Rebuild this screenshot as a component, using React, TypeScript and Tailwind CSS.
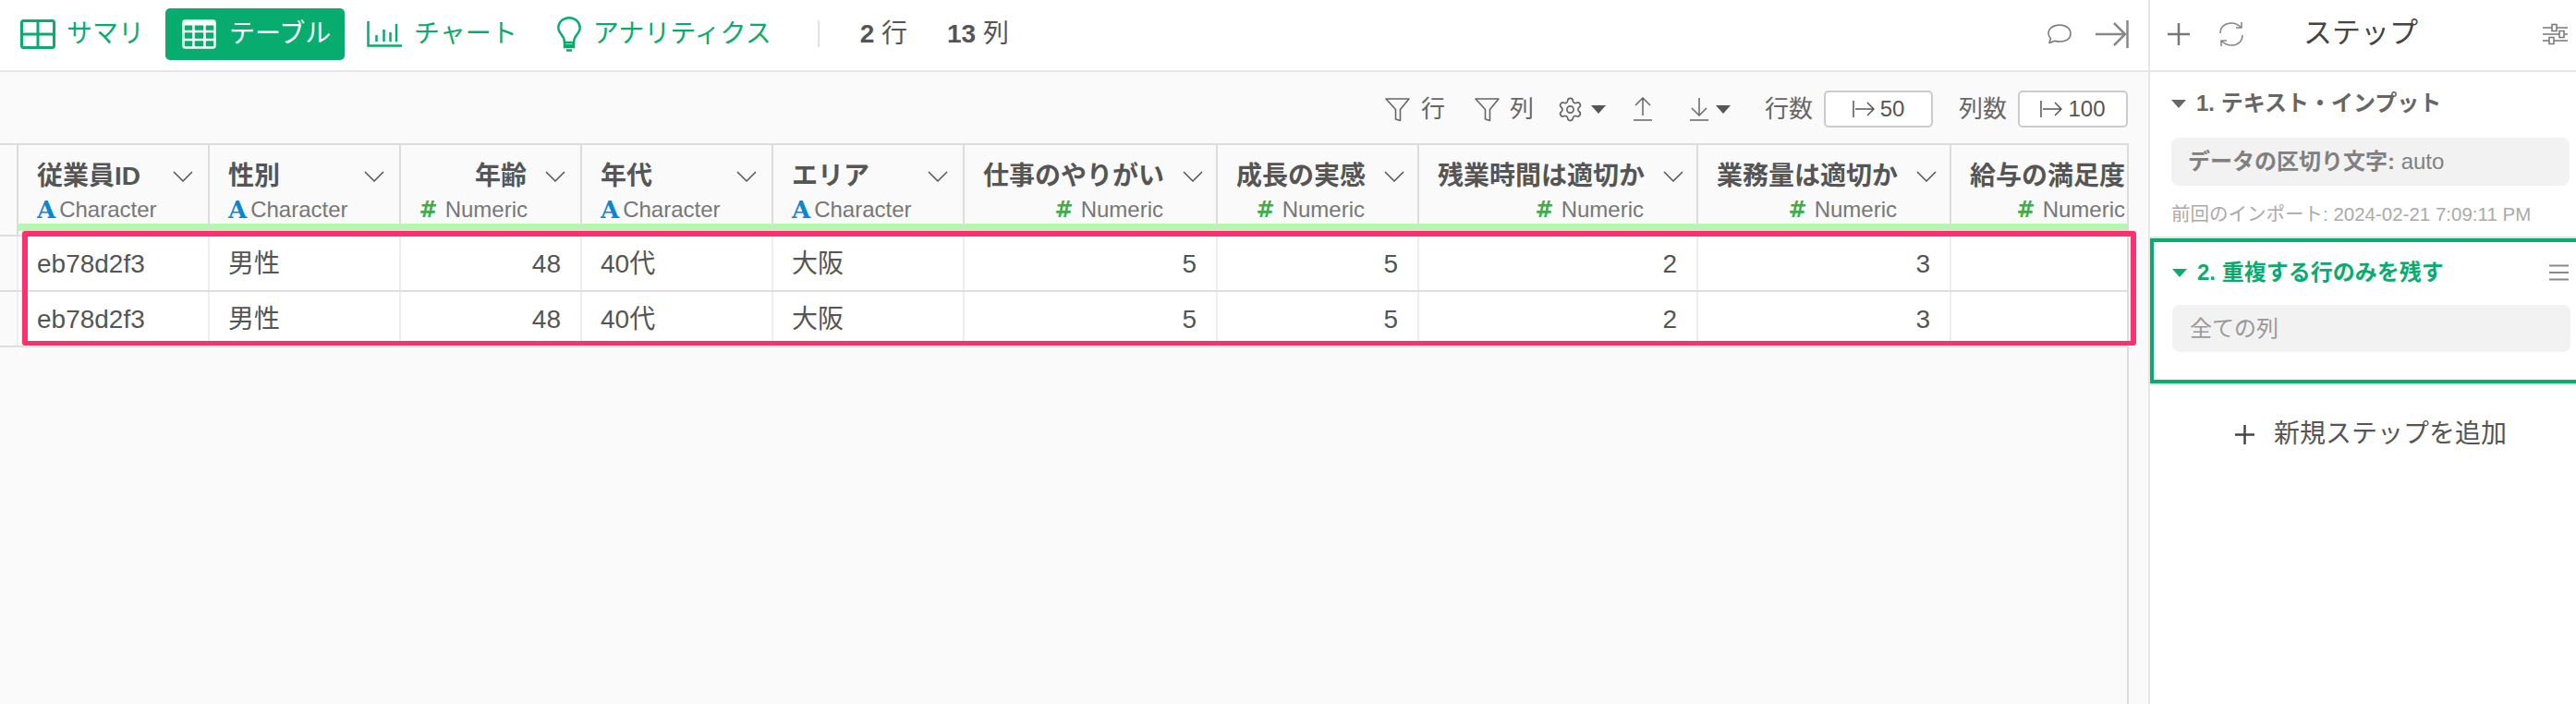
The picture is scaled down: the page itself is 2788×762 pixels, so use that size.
// Table view with step panel

import { Settings } from 'lucide-react';

type Col = { title: string; kind: 'chr' | 'num'; value: string; clip?: boolean };

const COLUMNS: Col[] = [
  { title: '従業員ID', kind: 'chr', value: 'eb78d2f3' },
  { title: '性別', kind: 'chr', value: '男性' },
  { title: '年齢', kind: 'num', value: '48' },
  { title: '年代', kind: 'chr', value: '40代' },
  { title: 'エリア', kind: 'chr', value: '大阪' },
  { title: '仕事のやりがい', kind: 'num', value: '5' },
  { title: '成長の実感', kind: 'num', value: '5' },
  { title: '残業時間は適切か', kind: 'num', value: '2' },
  { title: '業務量は適切か', kind: 'num', value: '3' },
  { title: '給与の満足度', kind: 'num', value: '', clip: true },
];

const GRID = 'grid grid-cols-[18px_207px_207px_196px_207px_207px_274px_218px_302px_274px_192px]';

function Chevron() {
  return (
    <svg width="22" height="12" viewBox="0 0 22 12" fill="none" stroke="#555" strokeWidth="1.5" className="shrink-0">
      <path d="M1 1l10 10L21 1" />
    </svg>
  );
}

function Caret({ color = '#555' }: { color?: string }) {
  return (
    <svg width="16" height="9" viewBox="0 0 16 9" className="shrink-0">
      <path d="M0 0h16L8 9z" fill={color} />
    </svg>
  );
}

function FilterIcon() {
  return (
    <svg width="27" height="27" viewBox="0 0 27 27" fill="none" stroke="#666" strokeWidth="1.6" strokeLinejoin="round">
      <path d="M1 2h25L16.5 13.5V25.5L11.5 24V13.5z" />
    </svg>
  );
}

function JumpIcon() {
  return (
    <svg width="24" height="18" viewBox="0 0 24 18" fill="none" stroke="#555" strokeWidth="1.5" className="shrink-0">
      <path d="M1 0v18M3 9h20M16 2l7 7-7 7" />
    </svg>
  );
}

function ColumnHead({ col }: { col: Col }) {
  const num = col.kind === 'num';
  return (
    <div className="flex flex-col border-l-2 border-[#dcdcdc] overflow-hidden">
      <div className={`flex flex-col h-[85px] pt-[20px] ${col.clip ? 'pl-[20px] pr-[2px]' : 'pl-[20px]'}`}>
        <div className="flex items-center h-[28px]">
          <span className={`flex-1 whitespace-nowrap text-[28px] leading-[28px] font-bold text-[#555] ${num ? 'text-right' : ''}`}>
            {col.title}
          </span>
          {!col.clip && <div className="ml-[20px] mr-[16px]"><Chevron /></div>}
        </div>
        <div className={`flex items-center h-[28px] mt-[8px] text-[24px] text-[#777] ${num ? 'justify-end' : ''} ${num && !col.clip ? 'pr-[57px]' : ''}`}>
          {num ? (
            <span className="font-['DejaVu_Sans'] font-bold text-[24px] text-[#3fae49] mr-[8px]">#</span>
          ) : (
            <span className="font-['DejaVu_Serif'] font-bold text-[26px] text-[#0b86d4] mr-[4px]">A</span>
          )}
          <span>{num ? 'Numeric' : 'Character'}</span>
        </div>
      </div>
      <div className="h-[8px] bg-[#b5f7b0]" />
      <div className="h-[4px]" />
    </div>
  );
}

function DataRow() {
  return (
    <div className={`${GRID} h-[60px] border-t-2 border-[#dedede]`}>
      <div />
      {COLUMNS.map((col) => (
        <div
          key={col.title}
          className={`flex items-center pt-[2px] bg-white border-l-2 border-[#eeeeee] text-[28px] text-[#555] ${
            col.kind === 'num' ? 'justify-end pr-[21px]' : 'pl-[20px]'
          }`}
        >
          {col.value}
        </div>
      ))}
    </div>
  );
}

export default function App() {
  return (
    <div className="flex w-[2788px] h-[762px] overflow-hidden bg-white [font-family:'Liberation_Sans','Noto_Sans_CJK_JP',sans-serif]">
      <main className="flex flex-col w-[2325px] bg-[#fafafa]">
        {/* Tabs */}
        <header className="flex items-center shrink-0 h-[78px] pb-[3px] pl-[22px] pr-[21px] bg-white border-b-2 border-[#e6e6e6]">
          <div className="flex items-center gap-[12px] text-[28px] text-[#08ac6e]">
            <svg width="38" height="32" viewBox="0 0 38 32" fill="none" stroke="#08ac6e" strokeWidth="3">
              <rect x="1.5" y="1.5" width="35" height="29" rx="2" />
              <path d="M19 2v28M2 16h34" />
            </svg>
            サマリ
          </div>
          <div className="flex items-center gap-[14px] w-[194px] h-[56px] ml-[23px] pl-[18px] rounded-[5px] bg-[#08ac6e] text-[28px] text-white">
            <svg width="37" height="32" viewBox="0 0 37 32" fill="none" stroke="#fff" strokeWidth="2.5" className="shrink-0">
              <rect x="1.5" y="1.5" width="34" height="29" rx="2" />
              <path d="M1 4h35" strokeWidth="5" />
              <path d="M12.5 2v28M24.5 2v28M2 13h33M2 22h33" />
            </svg>
            テーブル
          </div>
          <div className="flex items-center gap-[13px] ml-[24px] text-[28px] text-[#08ac6e]">
            <svg width="38" height="28" viewBox="0 0 38 28" fill="none" stroke="#08ac6e" strokeWidth="2.5">
              <path d="M1.5 0v26.5H38" />
              <path d="M10.5 15v7M18.5 9v13M25.5 12v10M32 3v19" />
            </svg>
            チャート
          </div>
          <div className="flex items-center gap-[13px] ml-[43px] text-[28px] text-[#08ac6e]">
            <svg width="26" height="38" viewBox="0 0 26 38" fill="none" stroke="#08ac6e" strokeWidth="2.5">
              <path d="M8 28c0-4-1-6-4-9.500C2 16 1.300 14.500 1.300 12.500 1.300 6 6.500 1.300 13 1.300S24.700 6 24.700 12.500c0 2-.7 3.500-2.700 6-3 3.500-4 5.500-4 9.500z" />
              <path d="M8 28v5h10v-5M8 31h10M10 36.500h6" />
            </svg>
            アナリティクス
          </div>
          <div className="w-[2px] h-[29px] ml-[50px] bg-[#e2e2e2]" />
          <div className="ml-[44px] text-[28px] text-[#555]"><b>2</b> 行</div>
          <div className="ml-[43px] text-[28px] text-[#555]"><b>13</b> 列</div>
          <div className="flex items-center gap-[26px] ml-auto">
            <svg width="26" height="22" viewBox="0 0 26 22" fill="none" stroke="#777" strokeWidth="1.5" strokeLinejoin="round">
              <path d="M3.500 15.500C2 14 1 12.500 1 10.500 1 5 6 1 13 1s12 4 12 9.500S20 19 13.500 19c-2 0-4-.3-5.500-.8L2 20.500z" />
            </svg>
            <svg width="36" height="30" viewBox="0 0 36 30" fill="none" stroke="#888" strokeWidth="2.500">
              <path d="M0 15h32M20 3l12 12-12 12" />
              <path d="M34.500 0v30" />
            </svg>
          </div>
        </header>

        {/* Toolbar */}
        <div className="flex items-center justify-end shrink-0 h-[77px] pt-[3px] pr-[22px] text-[26px] text-[#666]">
          <FilterIcon />
          <span className="ml-[12px]">行</span>
          <span className="ml-[32px] flex"><FilterIcon /></span>
          <span className="ml-[11px]">列</span>
          <span className="ml-[25px] flex"><Settings size={29} strokeWidth={1.4} color="#666" /></span>
          <span className="ml-[8px] flex"><Caret /></span>
          <svg width="20" height="26" viewBox="0 0 20 26" fill="none" stroke="#666" strokeWidth="1.5" className="ml-[30px]">
            <path d="M10 20V2M2 9l8-8 8 8M0 25h20" />
          </svg>
          <svg width="20" height="26" viewBox="0 0 20 26" fill="none" stroke="#666" strokeWidth="1.5" className="ml-[41px]">
            <path d="M10 1v18M2 12l8 8 8-8M0 25h20" />
          </svg>
          <span className="ml-[8px] flex"><Caret /></span>
          <span className="ml-[37px]">行数</span>
          <div className="flex items-center justify-center gap-[6px] w-[118px] h-[40px] ml-[12px] rounded-[5px] border-2 border-[#cccccc] bg-white text-[24px] text-[#555]">
            <JumpIcon />50
          </div>
          <span className="ml-[28px]">列数</span>
          <div className="flex items-center justify-center gap-[6px] w-[119px] h-[40px] ml-[12px] rounded-[5px] border-2 border-[#cccccc] bg-white text-[24px] text-[#555]">
            <JumpIcon />100
          </div>
        </div>

        {/* Table */}
        <div className="relative flex-1 w-[2304px] border-t-2 border-r-2 border-[#dcdcdc]">
          <div className={GRID}>
            <div />
            {COLUMNS.map((col) => <ColumnHead key={col.title} col={col} />)}
          </div>
          <DataRow />
          <DataRow />
          <div className="h-[2px] bg-[#dedede]" />
          {/* Highlight of the duplicated rows */}
          <div className="absolute left-[24px] top-[93px] w-[2288px] h-[124px] rounded-[3px] border-[6px] border-b-[5px] border-[#fe2f6e]" />
        </div>
      </main>

      {/* Steps */}
      <aside className="flex flex-col flex-1 border-l-2 border-[#e6e6e6]">
        <div className="flex items-center shrink-0 h-[78px] pb-[3px] pl-[19px] pr-[9px] border-b-2 border-[#e6e6e6]">
          <svg width="24" height="24" viewBox="0 0 24 24" fill="none" stroke="#777" strokeWidth="2.500">
            <path d="M12 0v24M0 12h24" />
          </svg>
          <svg width="30" height="28" viewBox="0 0 30 28" fill="none" stroke="#888" strokeWidth="1.600" className="ml-[30px]">
            <path d="M3 13C3 6 8 2 15 2c5 0 8 2 11 5M26 1v6h-6M27 15c0 7-5 11-12 11-5 0-8-2-11-5M4 27v-6h6" />
          </svg>
          <span className="ml-[63px] text-[31px] text-[#444]">ステップ</span>
          <svg width="27" height="24" viewBox="0 0 27 24" fill="none" stroke="#777" strokeWidth="1.500" className="ml-auto">
            <path d="M0 5h10M15 5h12M0 12h18M23 12h4M0 19h7M12 19h15" />
            <rect x="10" y="1.500" width="5" height="7" />
            <rect x="18" y="8.500" width="5" height="7" />
            <rect x="7" y="15.500" width="5" height="7" />
          </svg>
        </div>

        <section className="shrink-0 h-[178px] pt-[22px] pl-[23px] pr-[7px]">
          <div className="flex items-center h-[24px] text-[24px] font-bold text-[#666]">
            <Caret color="#666" />
            <span className="ml-[11px]">1. テキスト・インプット</span>
          </div>
          <div className="flex items-center h-[52px] mt-[25px] pl-[18px] rounded-[8px] bg-[#f2f2f2] text-[24px] text-[#808080]">
            <b>データの区切り文字:</b>&nbsp;auto
          </div>
          <p className="mt-[18px] text-[20.5px] leading-[26px] text-[#aaaaaa]">前回のインポート: 2024-02-21 7:09:11 PM</p>
        </section>

        <div className="shrink-0 border-y-2 border-[#e3e3e3]">
          <section className="h-[157px] pt-[21px] pl-[20px] pr-[6px] border-y-4 border-l-4 border-[#08ac6e]">
            <div className="flex items-center h-[24px] text-[24px] font-bold text-[#08ac6e]">
              <Caret color="#08ac6e" />
              <span className="ml-[11px]">2. 重複する行のみを残す</span>
              <svg width="21" height="18" viewBox="0 0 21 18" stroke="#888" strokeWidth="2" className="ml-auto mr-[2px]">
                <path d="M0 1.500h21M0 9h21M0 16.500h21" />
              </svg>
            </div>
            <div className="flex items-center h-[51px] mt-[23px] pl-[19px] rounded-[8px] bg-[#f2f2f2] text-[24px] text-[#999]">
              全ての列
            </div>
          </section>
        </div>

        <div className="flex items-center shrink-0 h-[106px] pl-[92px] text-[28px] text-[#555]">
          <svg width="21" height="21" viewBox="0 0 21 21" fill="none" stroke="#444" strokeWidth="2.500">
            <path d="M10.500 0v21M0 10.500h21" />
          </svg>
          <span className="ml-[21px]">新規ステップを追加</span>
        </div>
      </aside>
    </div>
  );
}
